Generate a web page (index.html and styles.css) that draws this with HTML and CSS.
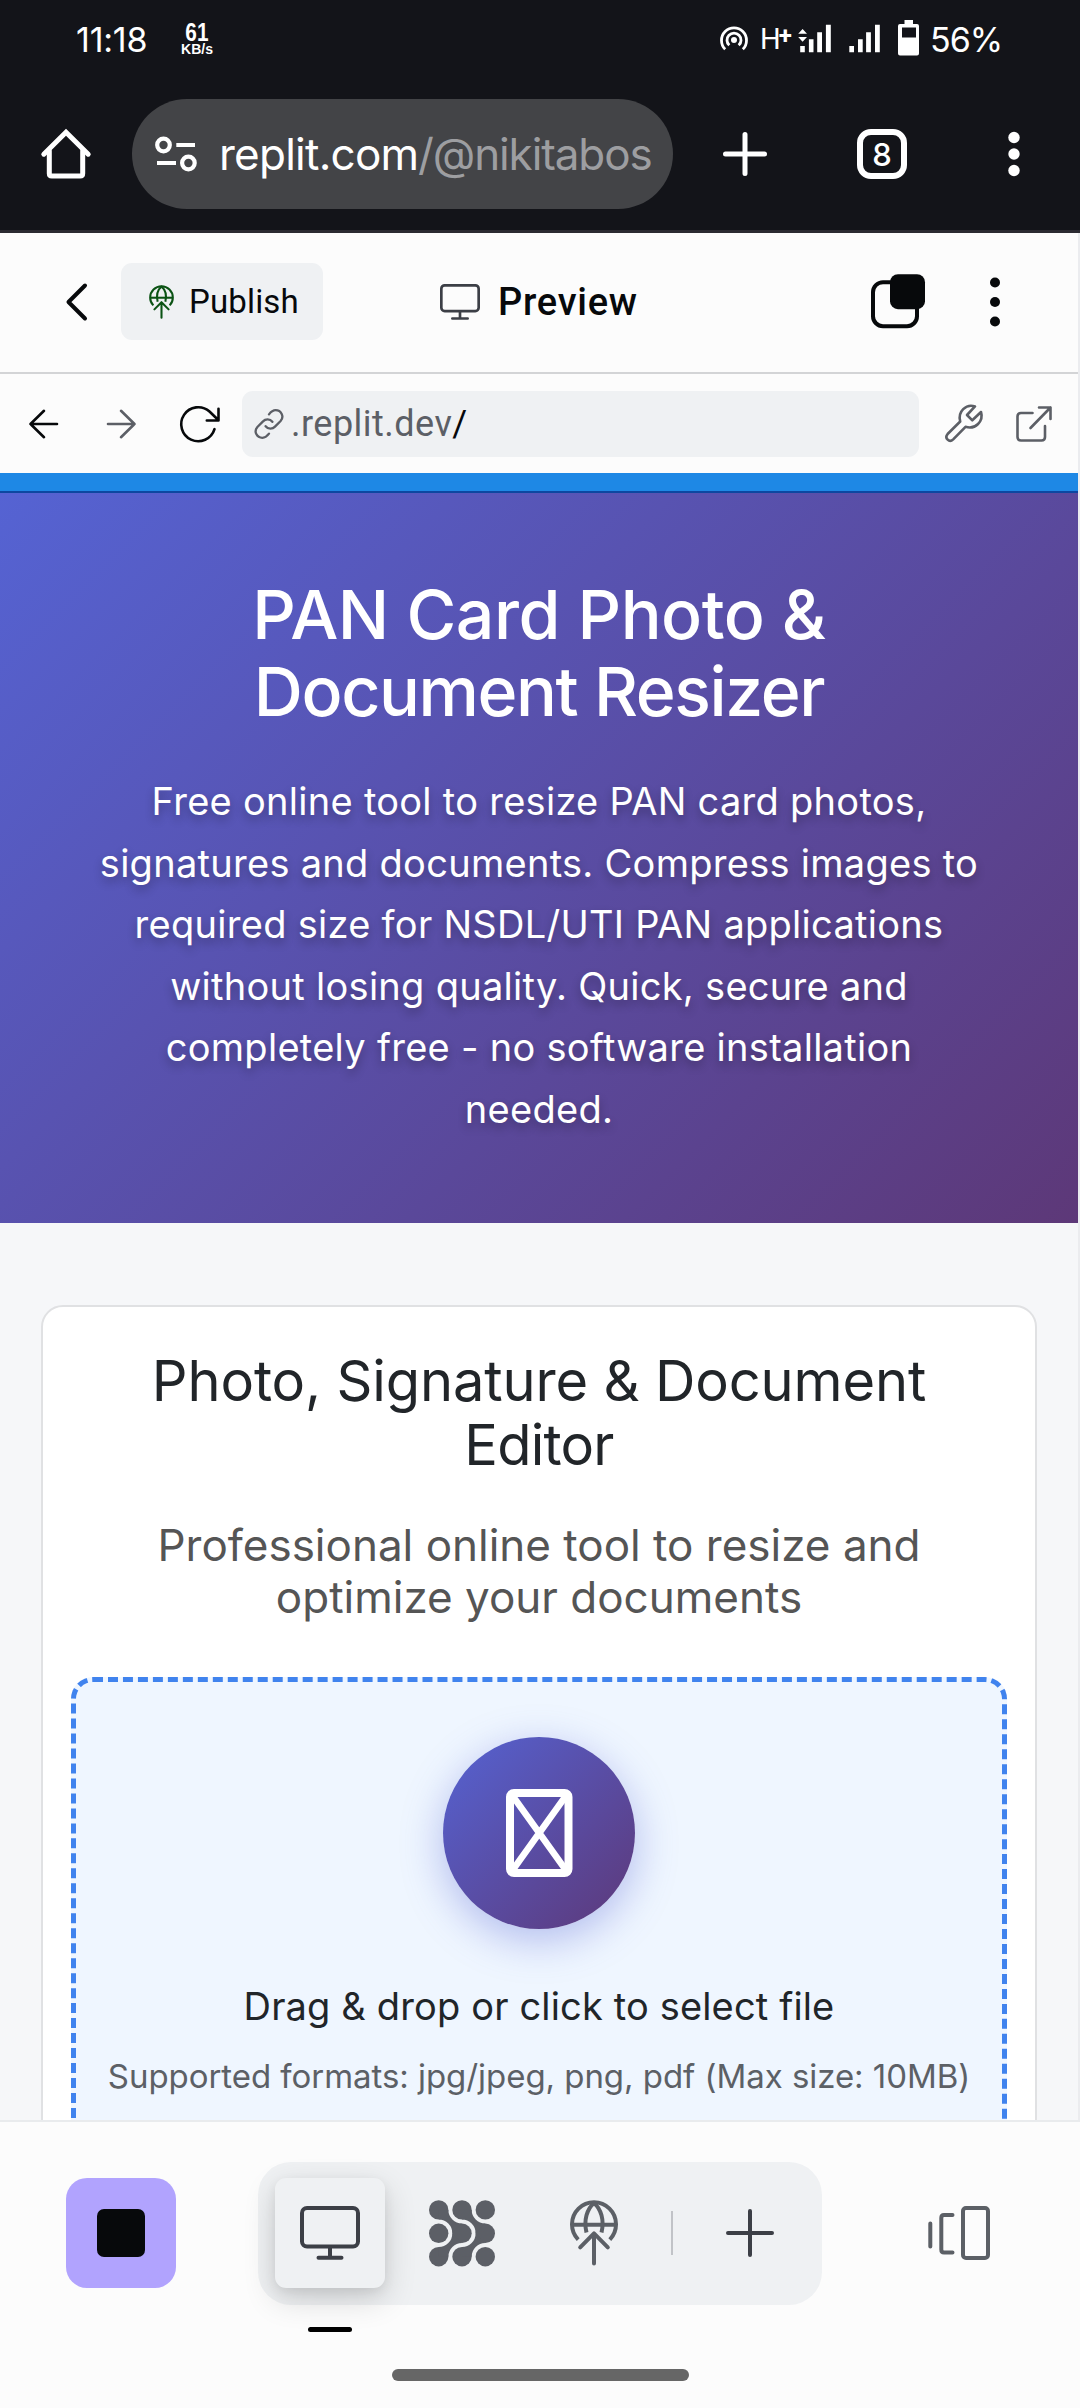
FILE: index.html
```html
<!DOCTYPE html>
<html lang="en">
<head>
<meta charset="utf-8">
<title>PAN Card Photo &amp; Document Resizer</title>
<link rel="stylesheet" href="styles.css">
</head>
<body>
<svg class="defs" aria-hidden="true">
  <symbol id="monitor" viewBox="0 0 60 54">
    <rect x="2" y="2" width="56" height="38.6" rx="5"/>
    <path d="M30 41v9M18.500 51.700h23"/>
  </symbol>
  <symbol id="globe" viewBox="0 0 48 66">
    <path d="M8.200 39.600A22 22 0 1 1 39.800 39.600" stroke-linecap="butt"/>
    <path d="M2 24.700h44" stroke-linecap="butt"/>
    <path d="M16.500 32.500C13.500 20 17 9 24 3C31 9 34.500 20 31.500 32.500" stroke-linecap="butt"/>
    <path d="M24 63.500V33.500M10.200 47.300L24 33.300L37.800 47.300"/>
  </symbol>
  <symbol id="neck" viewBox="0 0 24 24">
    <path d="M9.700 0A13.600 13.600 0 0 0 23.300 13.600L13.600 23.300A13.600 13.600 0 0 0 0 9.700L0 0Z"/>
  </symbol>
</svg>
<main class="screen">
  <header class="status">
    <span class="clock">11:18</span>
    <span class="speed"><b>61</b><small>KB/s</small></span>
    <span class="status-icons">
      <svg class="hotspot" width="28" height="28" viewBox="0 0 28 28" fill="none" stroke="#fff" stroke-width="2.800">
        <circle cx="14" cy="15" r="3" fill="#fff" stroke="none"/>
        <path d="M9.300 20.300a7 7 0 1 1 9.400 0M5.200 24.300a12.500 12.500 0 1 1 17.600 0"/>
      </svg>
      <span class="network">H<sup>+</sup></span>
      <svg class="signal-a" width="33" height="32" viewBox="0 0 33 32" fill="#fff">
        <path d="M4.600 7l4.400 4.800H.200zM4.600 19.700L.200 15H9zM2.200 24h4.600v6.300H2.200zM10.900 17.300h4.600v13h-4.600zM19.200 10.300h4.800v20h-4.800zM27.900 2.700h4.900v27.600h-4.900z"/>
      </svg>
      <svg class="signal-b" width="31" height="32" viewBox="0 0 31 32" fill="#fff">
        <path d="M.300 24H5v6.300H.300zM9 17.300h4.700v13H9zM17.100 10.300h4.800v20h-4.800zM26 2.700h4.800v27.600H26z"/>
      </svg>
      <svg class="battery" width="21" height="36" viewBox="0 0 21 36" fill="#fff" fill-rule="evenodd">
        <path d="M6.500 0H15v4h4q2 0 2 2v27.500q0 2-2 2H2q-2 0-2-2V6q0-2 2-2h4.500zM4 7.500v10h14v-10z"/>
      </svg>
      <span class="percent">56%</span>
    </span>
  </header>

  <nav class="browser">
    <svg class="home" width="50" height="50" viewBox="0 0 50 50" fill="none" stroke="#fff" stroke-width="5" stroke-linecap="round">
      <path d="M2.800 25.200L25 3.200L47.200 25.200"/>
      <path d="M8.300 22V44.500q0 2.500 2.500 2.500h28.400q2.500 0 2.500-2.500V22"/>
    </svg>
    <div class="omnibox">
      <svg width="42" height="36" viewBox="0 0 42 36" fill="none" stroke="#fff" stroke-width="4.200">
        <circle cx="8.500" cy="9" r="6.300"/><path d="M21.300 9H40M2 27h19"/><circle cx="33.400" cy="27" r="6.300"/>
      </svg>
      <span class="domain">replit.com</span><span class="path">/@nikitabos</span>
    </div>
    <svg class="new-tab" width="46" height="46" viewBox="0 0 46 46" stroke="#fff" stroke-width="5" stroke-linecap="round"><path d="M3.500 23h39M23 3.500v39"/></svg>
    <span class="tabs">8</span>
    <svg class="kebab" width="12" height="46" viewBox="0 0 12 46" fill="#fff"><circle cx="6" cy="6.500" r="5.700"/><circle cx="6" cy="23" r="5.700"/><circle cx="6" cy="39.500" r="5.700"/></svg>
  </nav>

  <section class="workspace">
    <div class="header">
      <svg class="back" width="24" height="40" viewBox="0 0 24 40" fill="none" stroke="#07090b" stroke-width="4" stroke-linecap="round" stroke-linejoin="round"><path d="M20 3.500L3.500 20L20 36.500"/></svg>
      <div class="publish">
        <svg class="icon" width="25" height="34"><use href="#globe"/></svg>
        <span>Publish</span>
      </div>
      <svg class="icon monitor-small" width="40" height="36"><use href="#monitor"/></svg>
      <span class="title">Preview</span>
      <svg class="layers" width="54" height="56" viewBox="0 0 54 56" fill="none">
        <rect x="2" y="8.200" width="44" height="44" rx="10" stroke="#07090b" stroke-width="4"/>
        <rect x="19" y=".2" width="35" height="35" rx="8" fill="#07090b"/>
      </svg>
      <svg width="10" height="50" viewBox="0 0 10 50" fill="#07090b"><circle cx="5" cy="5.500" r="5"/><circle cx="5" cy="25" r="5"/><circle cx="5" cy="44.500" r="5"/></svg>
    </div>

    <div class="urlbar">
      <svg width="30" height="30" viewBox="0 0 30 30" fill="none" stroke="#07090b" stroke-width="2.600" stroke-linecap="round" stroke-linejoin="round"><path d="M28 15H1.500M15 1.800L1.500 15L15 28.200"/></svg>
      <svg class="forward" width="30" height="30" viewBox="0 0 30 30" fill="none" stroke="#5c5f66" stroke-width="2.600" stroke-linecap="round" stroke-linejoin="round"><path d="M2 15H28.500M15 1.800L28.500 15L15 28.200"/></svg>
      <svg class="reload" width="40" height="38" viewBox="0 0 40 38" fill="none" stroke="#07090b" stroke-width="2.600" stroke-linecap="round" stroke-linejoin="round"><path d="M34.500 24.200A17 17 0 1 1 29.500 6.500L38 14.800M38.500 3.800V15.500H26.800"/></svg>
      <div class="field">
        <svg width="30" height="30" viewBox="0 0 30 30" fill="none" stroke="#5c5f66" stroke-width="2.300" stroke-linecap="round"><path d="M11.600 17.200c2.500 3.200 7 3 9.400.4l5.600-5.600c4-4.500.6-10.800-5-10.800c-2.900 0-4.700 1.700-6.600 4.200M18.400 12.800c-2.500-3.200-7-3-9.400-.4L3.400 18c-4 4.500-.6 10.800 5 10.800c2.900 0 4.700-1.700 6.600-4.200"/></svg>
        <span class="host">.replit.dev</span><span class="slash">/</span>
      </div>
      <svg class="wrench" width="38" height="38" viewBox="0 0 38 38" fill="none" stroke="#5c5f66" stroke-width="2.600" stroke-linejoin="round"><path d="M30 2.400C21 -.5 12.500 7.500 15.200 17.500L2.600 30C-.8 34 4.200 39.200 8.200 35.400L20.500 22.800C30.500 26 38.800 17 36 8L27.300 16.300L22 11Z"/></svg>
      <svg class="external" width="36" height="36" viewBox="0 0 36 36" fill="none" stroke="#5c5f66" stroke-width="2.600" stroke-linecap="round" stroke-linejoin="round"><path d="M16.500 7H5Q1.500 7 1.500 10.500V31Q1.500 34.500 5 34.500H25.500Q29 34.500 29 31V20M14.500 22L34.500 1.500M23 1.500H34.500V13"/></svg>
    </div>

    <div class="preview">
      <div class="topline"></div>
      <div class="hero">
        <h1><span class="l1">PAN Card Photo &amp;</span><span class="l2">Document Resizer</span></h1>
        <p>
          <span>Free online tool to resize PAN card photos,</span>
          <span>signatures and documents. Compress images to</span>
          <span>required size for NSDL/UTI PAN applications</span>
          <span>without losing quality. Quick, secure and</span>
          <span>completely free - no software installation</span>
          <span>needed.</span>
        </p>
      </div>
      <div class="content">
        <div class="card">
          <h2><span>Photo, Signature &amp; Document</span><span class="tight">Editor</span></h2>
          <p class="lead"><span>Professional online tool to resize and</span><span>optimize your documents</span></p>
          <div class="dropzone">
            <div class="badge">
              <svg width="67" height="88" viewBox="0 0 67 88" fill="none" stroke="#fff" stroke-width="8"><rect x="4" y="4" width="58.500" height="80" rx="4"/><path d="M6 6L60.500 82M60.500 6L6 82" stroke-width="6.500"/></svg>
            </div>
            <p class="prompt">Drag &amp; drop or click to select file</p>
            <p class="formats">Supported formats: jpg/jpeg, png, pdf (Max size: 10MB)</p>
          </div>
        </div>
      </div>
    </div>
  </section>

  <footer class="dock">
    <div class="dock-row">
      <span class="stop"><i></i></span>
      <div class="tools">
        <span class="tool active"><svg class="icon" width="60" height="54"><use href="#monitor"/></svg><i class="marker"></i></span>
        <span class="tool">
          <svg width="66" height="67" viewBox="0 0 66 67" fill="#5c5f66">
            <circle cx="9.700" cy="9.900" r="9.700"/><circle cx="33" cy="9.900" r="9.700"/><circle cx="56.300" cy="9.900" r="9.700"/>
            <circle cx="9.700" cy="33.300" r="9.700"/><circle cx="33" cy="33.300" r="9.700"/><circle cx="56.300" cy="33.300" r="9.700"/>
            <circle cx="9.700" cy="56.700" r="9.700"/><circle cx="33" cy="56.700" r="9.700"/><circle cx="56.300" cy="56.700" r="9.700"/>
            <use href="#neck" width="24" height="24" transform="translate(9.700 9.900)"/>
            <use href="#neck" width="24" height="24" transform="translate(33 9.900)"/>
            <use href="#neck" width="24" height="24" transform="translate(9.700 56.700) scale(1 -1)"/>
            <use href="#neck" width="24" height="24" transform="translate(33 56.700) scale(1 -1)"/>
          </svg>
        </span>
        <span class="tool"><svg class="icon gray" width="48" height="66"><use href="#globe"/></svg></span>
        <i class="divider"></i>
        <span class="tool"><svg width="48" height="48" viewBox="0 0 48 48" stroke="#3c3f46" stroke-width="4" stroke-linecap="round"><path d="M2 24h44M24 2v44"/></svg></span>
      </div>
      <svg class="carousel" width="62" height="54" viewBox="0 0 62 54" fill="none" stroke="#5c6066" stroke-width="4" stroke-linecap="round"><path d="M2.300 17.500v23M24.500 9H16Q13.300 9 13.300 12V43.500Q13.300 46.500 16 46.500H24.500"/><rect x="35" y="2" width="25" height="50" rx="3"/></svg>
    </div>
    <div class="gesture"></div>
  </footer>
</main>
</body>
</html>
```
FILE: styles.css
```css
* { box-sizing: border-box; }
body { margin: 0; font-family: Inter, sans-serif; }
h1, h2, p { margin: 0; font-weight: 400; }
svg { display: block; flex: none; overflow: visible; }
.defs { width: 0; height: 0; float: left; }
.screen { width: 1080px; height: 2408px; display: flex; flex-direction: column; overflow: hidden; background: #fcfcfc; }

/* Phone status bar */
.status { height: 80px; background: #131419; color: #fff; display: flex; align-items: center; padding: 0 80px 0 76px; }
.clock { font-size: 34px; line-height: 40px; width: 105px; letter-spacing: -.2px; }
.speed { display: flex; flex-direction: column; align-items: center; width: 32px; padding-bottom: 4px; }
.speed b { font: 700 25px/22px "Liberation Sans", sans-serif; transform: scaleX(.83); }
.speed small { font: 700 14px/12px "Liberation Sans", sans-serif; }
.status-icons { flex: 1; display: flex; align-items: center; justify-content: flex-end; }
.hotspot { margin: 0 12px 2px 0; }
.network { font: 29px/40px Roboto, sans-serif; width: 38px; margin-bottom: 2px; letter-spacing: -2px; white-space: nowrap; }
.network sup { font-size: 24px; font-weight: 700; line-height: 0; vertical-align: 5px; }
.signal-a { margin-right: 18px; margin-bottom: 4px; }
.signal-b { margin-right: 18px; margin-bottom: 4px; }
.battery { margin-right: 11px; margin-bottom: 4px; }
.percent { font-size: 34px; line-height: 40px; letter-spacing: -1px; width: 70px; white-space: nowrap; }

/* Browser toolbar */
.browser { height: 153px; background: #131419; border-bottom: 3px solid #2b2a31; display: flex; align-items: center; padding: 0 60px 2px 41px; }
.omnibox { width: 541px; height: 110px; margin-left: 41px; padding-left: 23px; border-radius: 55px; background: #434447; display: flex; align-items: center; color: #fff; font-size: 44px; line-height: 110px; white-space: nowrap; }
.domain { margin-left: 22px; width: 199px; letter-spacing: -.75px; }
.path { color: #9d9ea1; letter-spacing: -1.1px; }
.new-tab { margin-left: 49px; }
.tabs { width: 50px; height: 50px; margin-left: 89px; border: 6px solid #fff; border-radius: 14px; font-size: 31px; font-weight: 500; line-height: 40px; text-align: center; color: #fff; }
.kebab { margin-left: 101px; }

/* Workspace header */
.workspace { height: 1887px; border-right: 2px solid #ebecef; overflow: hidden; background: #fcfcfc; }
.header { height: 141px; border-bottom: 2px solid #d3d4d6; display: flex; align-items: center; padding: 0 0 2px 66px; font-family: Roboto, sans-serif; color: #07090b; }
.icon { fill: none; stroke: #3c3f46; stroke-width: 4; stroke-linecap: round; stroke-linejoin: round; }
.icon.gray { stroke: #5c6066; }
.back { margin-left: -1px; }
.publish { width: 202px; height: 77px; margin-left: 32px; padding-left: 28px; border-radius: 11px; background: #eff1f3; display: flex; align-items: center; font-size: 33px; letter-spacing: .15px; line-height: 77px; }
.publish .icon { stroke: #0b5314; }
.publish span { margin-left: 15px; }
.monitor-small { margin-left: 117px; }
.title { margin-left: 18px; width: 373px; font-size: 38px; font-weight: 500; letter-spacing: .74px; line-height: 60px; }
.layers + svg { margin-left: 65px; }

/* Preview address bar */
.urlbar { height: 99px; display: flex; align-items: center; padding-left: 29px; }
.forward { margin-left: 47px; }
.reload { margin-left: 44px; }
.field { width: 677px; height: 66px; margin-left: 22px; padding-left: 12px; border-radius: 11px; background: #eff1f3; display: flex; align-items: center; font: 36px/66px Roboto, sans-serif; color: #5c5f66; }
.host, .slash { padding-top: 1px; }
.host { margin-left: 7px; letter-spacing: .48px; }
.slash { color: #07090b; }
.wrench { margin-left: 26px; margin-bottom: 2px; }
.external { margin-left: 33px; }

/* Previewed page */
.preview { height: 1647px; background: #f6f7f9; overflow: hidden; text-align: center; }
.preview span { display: block; white-space: nowrap; }
.topline { height: 20px; background: #1e88e5; border-bottom: 2px solid #0d47a1; }
.hero { height: 730px; padding-top: 83px; color: #fff; background: linear-gradient(135deg, #5563d3 0%, #5d3878 100%); }
.hero h1 { font-size: 68px; line-height: 77px; font-weight: 550; }
.hero .l1 { letter-spacing: -.5px; }
.hero .l2 { letter-spacing: -1.4px; }
.hero p { margin-top: 41px; font-size: 38px; line-height: 61.5px; letter-spacing: .28px; text-shadow: 0 5px 10px rgba(0, 0, 0, .3); }
.content { padding: 82px 41px 0; }
.card { height: 1000px; border: 2px solid #e0e1e3; border-radius: 22px; background: #fff; padding: 42px 28px 0; }
.card h2 { font-size: 56px; line-height: 64px; letter-spacing: -.14px; color: #212529; }
.card h2 .tight { letter-spacing: -.77px; }
.lead { margin-top: 42px; font-size: 44px; line-height: 52px; color: #555; }
.dropzone { height: 700px; margin-top: 54px; padding-top: 55px; border: 5px dashed #4083ee; border-radius: 22px; background: #eff6ff; }
.badge { width: 192px; height: 192px; margin: 0 auto; border-radius: 50%; background: linear-gradient(135deg, #5563d3 0%, #5d3878 100%); box-shadow: 0 11px 42px rgba(85, 99, 211, .4); display: flex; align-items: center; justify-content: center; }
.prompt { margin-top: 52px; font-size: 38px; line-height: 50px; letter-spacing: .15px; color: #212529; }
.formats { margin-top: 23px; font-size: 33px; line-height: 44px; letter-spacing: -.05px; color: #5c6066; white-space: nowrap; }

/* Bottom dock */
.dock { height: 288px; border-top: 2px solid #e9ebed; background: #fcfcfc; }
.dock-row { height: 222px; display: flex; align-items: center; padding-left: 66px; }
.stop { width: 110px; height: 110px; border-radius: 21px; background: #b1a3fe; display: flex; align-items: center; justify-content: center; }
.stop i { width: 48px; height: 48px; border-radius: 7px; background: #07090b; }
.tools { width: 564px; height: 143px; margin-left: 82px; border-radius: 33px; background: #eff1f3; display: flex; align-items: center; justify-content: center; gap: 22px; }
.tool { position: relative; width: 110px; height: 110px; border-radius: 11px; display: flex; align-items: center; justify-content: center; flex: none; }
.active { background: #eff1f3; box-shadow: 0 11px 32px rgba(0, 0, 0, .16), 0 4px 12px rgba(0, 0, 0, .07); }
.marker { position: absolute; left: 33px; top: 149px; width: 44px; height: 5px; border-radius: 3px; background: #000; }
.divider { width: 2px; height: 44px; background: #c1c3c7; }
.carousel { margin-left: 106px; }
.gesture { width: 297px; height: 12px; margin: 25px auto 0; border-radius: 6px; background: #666; }
```
